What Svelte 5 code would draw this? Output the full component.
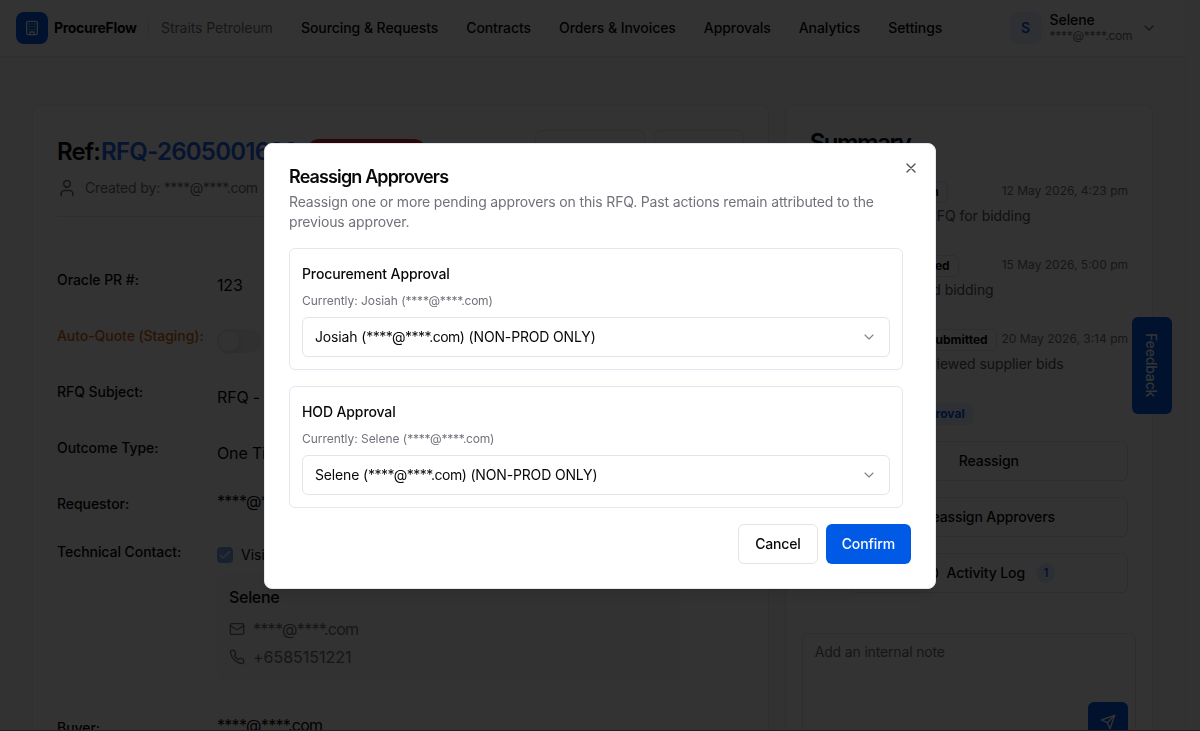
<script>
  const navItems = ['Sourcing & Requests', 'Contracts', 'Orders & Invoices', 'Approvals', 'Analytics', 'Settings'];

  const timeline = [
    { status: 'Submission', width: 98, date: '12 May 2026, 4:23 pm', text: 'Opened RFQ for bidding', textWidth: 181 },
    { status: 'Bid Closed', width: 109, date: '15 May 2026, 5:00 pm', text: 'System closed bidding', textWidth: 144 },
    { status: 'Review Submitted', width: 147, date: '20 May 2026, 3:14 pm', text: 'Selene reviewed supplier bids', textWidth: 214 }
  ];

  const approvers = [
    { title: 'Procurement Approval', name: 'Josiah' },
    { title: 'HOD Approval', name: 'Selene' }
  ];

  const email = '****@****.com';

  let open = $state(true);
  let note = $state('');
</script>

{#snippet chevron()}
  <svg class="chevron" viewBox="0 0 24 24"><path d="m6 9 6 6 6-6" /></svg>
{/snippet}

{#snippet mail()}<span class="email">{email}</span>{/snippet}

<div class="page">
  <div class="view">
    <header>
      <div class="logo">
        <svg viewBox="0 0 24 24">
          <rect x="4" y="2" width="16" height="20" rx="2" />
          <path d="M9 22v-4h6v4M8 6h.01M16 6h.01M12 6h.01M12 10h.01M12 14h.01M16 10h.01M16 14h.01M8 10h.01M8 14h.01" />
        </svg>
      </div>
      <span class="brand">ProcureFlow</span>
      <span class="sep"></span>
      <span class="company">Straits Petroleum</span>
      <nav>
        {#each navItems as item}
          <span>{item}</span>
        {/each}
      </nav>
      <div class="user">
        <div class="avatar">S</div>
        <div class="who">
          <div class="name">Selene</div>
          <div class="mail">{@render mail()}</div>
        </div>
        {@render chevron()}
      </div>
    </header>

    <main>
      <section class="card details">
        <div class="ref-row">
          <h1>Ref: <span>RFQ-2605001622</span></h1>
          <div class="expired"></div>
          <div class="ghost wide"></div>
          <div class="ghost"></div>
        </div>
        <div class="created">
          <svg viewBox="0 0 24 24"><path d="M19 21v-2a4 4 0 0 0-4-4H9a4 4 0 0 0-4 4v2" /><circle cx="12" cy="7" r="4" /></svg>
          <div>Created by: {@render mail()}</div>
        </div>

        <div class="fields">
          <div class="field"><label for="pr">Oracle PR #:</label><div id="pr" class="value">123</div></div>
          <div class="field">
            <label class="orange" for="auto">Auto-Quote (Staging):</label>
            <div id="auto" class="value"><span class="toggle"><i></i></span></div>
          </div>
          <div class="field"><label for="subject">RFQ Subject:</label><div id="subject" class="value">RFQ - 123</div></div>
          <div class="field"><label for="outcome">Outcome Type:</label><div id="outcome" class="value">One Time</div></div>
          <div class="field short"><label for="req">Requestor:</label><div id="req" class="value">{@render mail()}</div></div>
          <div class="field contact">
            <label for="tech">Technical Contact:</label>
            <div id="tech">
              <div class="visible">
                <span class="check"><svg viewBox="0 0 24 24"><path d="M20 6 9 17l-5-5" /></svg></span>
                Visible
              </div>
              <div class="contact-box">
                <div class="contact-name">Selene</div>
                <div class="line">
                  <svg viewBox="0 0 24 24"><rect x="2" y="4" width="20" height="16" rx="2" /><path d="m22 7-8.97 5.7a1.94 1.94 0 0 1-2.06 0L2 7" /></svg>
                  {@render mail()}
                </div>
                <div class="line phone">
                  <svg viewBox="0 0 24 24"><path d="M22 16.92v3a2 2 0 0 1-2.18 2 19.79 19.79 0 0 1-8.63-3.07 19.5 19.5 0 0 1-6-6 19.79 19.79 0 0 1-3.07-8.67A2 2 0 0 1 4.11 2h3a2 2 0 0 1 2 1.72 12.84 12.84 0 0 0 .7 2.81 2 2 0 0 1-.45 2.11L8.09 9.91a16 16 0 0 0 6 6l1.27-1.27a2 2 0 0 1 2.11-.45 12.84 12.84 0 0 0 2.81.7A2 2 0 0 1 22 16.92z" /></svg>
                  +6585151221
                </div>
              </div>
            </div>
          </div>
          <div class="field short"><label for="buyer">Buyer:</label><div id="buyer" class="value">{@render mail()}</div></div>
        </div>
      </section>

      <section class="card summary">
        <h2>Summary</h2>
        <div class="timeline">
          {#each timeline as t}
            <div class="event">
              <div class="event-head">
                <span class="badge" style="width: {t.width}px">{t.status}</span>
                <time>{t.date}</time>
              </div>
              <div class="event-text" style="width: {t.textWidth}px">{t.text}</div>
            </div>
          {/each}
          <div class="pending"><span class="badge blue">Pending Approval</span></div>
          <div class="actions">
            <button>Reassign</button>
            <button>Reassign Approvers</button>
            <button>
              <svg viewBox="0 0 24 24"><circle cx="12" cy="12" r="10" /><path d="M12 6v6l4 2" /></svg>
              Activity Log
              <span class="count">1</span>
            </button>
          </div>
        </div>
        <div class="note">
          <textarea placeholder="Add an internal note" bind:value={note}></textarea>
          <button class="send" aria-label="Send">
            <svg viewBox="0 0 24 24"><path d="m22 2-7 20-4-9-9-4Z" /><path d="M22 2 11 13" /></svg>
          </button>
        </div>
      </section>
    </main>
  </div>
  <div class="scroll"></div>
  <div class="feedback">Feedback</div>
  <div class="strip"></div>
</div>

{#if open}
  <div class="overlay"></div>
  <div class="modal" role="dialog">
    <div class="modal-head">
      <h3>Reassign Approvers</h3>
      <p>Reassign one or more pending approvers on this RFQ. Past actions remain attributed to the previous approver.</p>
    </div>
    <div class="list">
      {#each approvers as a}
        <div class="approver">
          <div class="approver-title">{a.title}</div>
          <div class="current">Currently: {a.name} ({@render mail()})</div>
          <div class="select">
            <span>{a.name} ({@render mail()}) (NON-PROD ONLY)</span>
            {@render chevron()}
          </div>
        </div>
      {/each}
    </div>
    <div class="modal-foot">
      <button class="cancel" onclick={() => (open = false)}>Cancel</button>
      <button class="confirm" onclick={() => (open = false)}>Confirm</button>
    </div>
    <button class="close" aria-label="Close" onclick={() => (open = false)}>
      <svg viewBox="0 0 24 24"><path d="M18 6 6 18M6 6l12 12" /></svg>
    </button>
  </div>
{/if}

<style>
  :global(body) {
    font-family: Inter, "Liberation Sans", sans-serif;
    font-size: 14px;
    line-height: 20px;
    letter-spacing: -0.155px;
    color: #09090b;
    overflow: hidden;
  }
  .page, .page *, .modal, .modal * { box-sizing: border-box; }
  svg { fill: none; stroke: currentColor; stroke-width: 2; stroke-linecap: round; stroke-linejoin: round; flex: none; display: block; }
  button { font: inherit; font-weight: 500; letter-spacing: -0.1px; color: inherit; background: #fff; }
  h1, h2, h3, p { margin: 0; }
  .email { letter-spacing: -0.036em; }

  .page { display: flex; height: 731px; overflow: hidden; background: #fafafa; position: relative; }
  .view { flex: 1; min-width: 0; }
  .scroll { width: 15px; background: #f7f7f7; border-left: 1px solid #ededed; }

  header { height: 57px; padding: 0 28px 0 16px; display: flex; align-items: center; background: #fff; border-bottom: 1px solid #e8e8e8; font-weight: 500; letter-spacing: -0.07px; }
  .logo { width: 32px; height: 32px; border-radius: 8px; background: #005ae6; color: #fff; display: grid; place-items: center; }
  .logo svg { width: 16px; height: 16px; }
  .brand { margin-left: 6px; font-weight: 700; letter-spacing: -0.3px; width: 83px; white-space: nowrap; }
  .sep { width: 1px; height: 18px; margin: 0 12px 0 11px; background: #e4e4e7; }
  .company { width: 112px; white-space: nowrap; font-weight: 400; color: #71717a; }
  nav { display: flex; gap: 28px; margin-left: 28px; white-space: nowrap; }
  .user { margin-left: auto; display: flex; align-items: center; gap: 8px; }
  .avatar { width: 32px; height: 32px; border-radius: 8px; background: #e9f1fd; color: #005ae6; font-weight: 600; display: grid; place-items: center; }
  .who { padding-bottom: 2px; width: 83.5px; }
  .name { line-height: 16px; }
  .mail { font-size: 12px; line-height: 15px; font-weight: 400; color: #71717a; }
  .mail .email, .mail :global(.email), .current :global(.email) { letter-spacing: -0.02em; }
  .user .chevron, .user :global(.chevron) { width: 16px; height: 16px; color: #71717a; }

  main { display: grid; grid-template-columns: 2fr 1fr; gap: 16px; padding: 48px 32px 0; }
  .card { background: #fff; border: 1px solid #e8e8e8; border-radius: 8px; height: 700px; min-width: 0; }
  .details { padding: 24px; }
  .ref-row { display: flex; height: 42px; align-items: center; white-space: nowrap; }
  h1 { font-size: 24px; line-height: 32px; font-weight: 600; letter-spacing: -0.9px; width: 250px; padding-top: 1px; }
  h1 span { color: #2563eb; margin-left: -4px; letter-spacing: -0.75px; }
  .expired { width: 119px; height: 24px; border-radius: 12px; background: #dc2626; }
  .ghost { width: 90px; height: 42px; border: 1px solid #e4e4e7; border-radius: 6px; margin-left: 9px; }
  .ghost.wide { width: 110px; margin-left: auto; }
  .created { display: flex; align-items: center; gap: 8px; height: 45px; padding-bottom: 12px; color: #71717a; border-bottom: 1px solid #e4e4e7; }
  .created svg { width: 20px; height: 20px; }

  .fields { display: flex; flex-direction: column; gap: 16px; padding-top: 48px; }
  .field { display: grid; grid-template-columns: 160px 1fr; height: 40px; }
  .field.short { height: 32px; }
  .field.contact { height: 160px; }
  label { padding-top: 5px; font-weight: 500; letter-spacing: -0.06px; white-space: nowrap; }
  .orange { color: #ca6510; }
  .value { font-size: 16px; line-height: 24px; display: flex; align-items: center; }
  .value .email, .value :global(.email), .line :global(.email) { letter-spacing: -0.044em; }
  .short .value { height: 24px; }
  .toggle { width: 44px; height: 24px; border-radius: 12px; background: #ededed; padding: 2px; }
  .toggle i { display: block; width: 20px; height: 20px; border-radius: 50%; background: #fafafa; box-shadow: 0 2px 6px rgba(0, 0, 0, .08); }
  .visible { display: flex; align-items: center; gap: 8px; height: 36px; letter-spacing: 0; }
  .check { width: 16px; height: 16px; border-radius: 4px; background: #7aa5f0; color: #fff; display: grid; place-items: center; }
  .check svg { width: 14px; height: 14px; }
  .contact-box { width: 464px; height: 108px; padding: 12px; border-radius: 6px; background: #f7f7f7; font-size: 16px; line-height: 24px; letter-spacing: -0.02px; }
  .contact-name { font-weight: 500; margin-bottom: 8px; letter-spacing: -0.3px; }
  .line { display: flex; align-items: center; gap: 8px; color: #71717a; }
  .line svg { width: 16px; height: 16px; }
  .phone { margin-top: 4px; }

  .summary { padding: 21px 24px; }
  h2 { font-size: 24px; line-height: 32px; font-weight: 600; letter-spacing: -1.5px; }
  .timeline { margin: 20px 0 0 11px; padding-left: 28px; border-left: 1px solid #e4e4e7; height: 413px; }
  .event { height: 74px; }
  .event-head { display: flex; align-items: center; justify-content: space-between; height: 24px; white-space: nowrap; letter-spacing: 0; }
  .badge { display: inline-block; border: 1px solid #e4e4e7; border-radius: 6px; height: 22px; padding: 0 8px; font-size: 12px; line-height: 20px; font-weight: 700; letter-spacing: 0; text-align: right; white-space: nowrap; position: relative; top: 1px; }
  .badge.blue { width: 124px; background: #e9f1fd; border-color: #e9f1fd; color: #005ae6; }
  time { font-size: 12px; color: #71717a; }
  .event-text { display: flex; justify-content: flex-end; margin-top: 3px; height: 20px; color: #52525b; white-space: nowrap; letter-spacing: -0.05px; }
  .pending { height: 40px; }
  .pending .badge { top: 2px; }
  .actions { display: flex; flex-direction: column; gap: 16px; }
  .actions button { height: 40px; border: 1px solid #e4e4e7; border-radius: 6px; display: flex; align-items: center; justify-content: center; gap: 8px; padding: 0; }
  .actions svg { width: 16px; height: 16px; }
  .count { margin-left: 4px; min-width: 18px; height: 20px; border-radius: 9px; background: #dbeafe; color: #1d4ed8; font-size: 12px; display: grid; place-items: center; }
  .note { margin: 41px -8px 0; position: relative; }
  textarea { display: block; width: 100%; height: 120px; resize: none; border: 1px solid #e4e4e7; border-radius: 6px; background: #fff; padding: 8px 12px; font: inherit; letter-spacing: inherit; outline: 0; }
  textarea::placeholder { color: #71717a; }
  .send { position: absolute; right: 8px; top: 69px; width: 40px; height: 40px; padding: 0; border: 0; border-radius: 6px; background: #005ae6; color: #fff; display: grid; place-items: center; }
  .send svg { width: 16px; height: 16px; }

  .feedback { position: absolute; left: 1132px; top: 317px; width: 40px; height: 97px; padding-right: 2px; border-radius: 6px; background: #005ae6; color: #fff; font-weight: 500; writing-mode: vertical-rl; display: grid; place-items: center; }
  .strip { position: absolute; left: 0; right: 0; bottom: 0; height: 1px; background: #c08a98; }

  .overlay { position: fixed; inset: 0; background: rgba(0, 0, 0, .8); }
  .modal {
    position: fixed; left: 50%; top: 50%; transform: translate(-50%, -50%);
    width: 672px; height: 446px; padding: 24px;
    display: flex; flex-direction: column; gap: 16px;
    background: #fff; border: 1px solid #e2e8f0; border-radius: 8px;
    box-shadow: 0 10px 15px -3px rgba(0, 0, 0, .1), 0 4px 6px -4px rgba(0, 0, 0, .1);
  }
  .modal-head { display: flex; flex-direction: column; gap: 6px; }
  h3 { font-size: 18px; line-height: 18px; font-weight: 600; letter-spacing: -0.87px; }
  .modal-head p { color: #71717a; }
  .list { display: flex; flex-direction: column; gap: 16px; padding-right: 8px; }
  .approver { height: 122px; padding: 12px; border: 1px solid #e2e8f0; border-radius: 6px; }
  .approver-title { font-weight: 500; letter-spacing: -0.12px; line-height: 26px; margin-bottom: 6px; }
  .current { font-size: 12px; line-height: 16px; color: #71717a; margin-bottom: 8px; letter-spacing: -0.04px; }
  .select { height: 40px; padding: 0 12px; display: flex; align-items: center; justify-content: space-between; border: 1px solid #e4e4e7; border-radius: 6px; }
  .select .chevron, .select :global(.chevron) { width: 16px; height: 16px; opacity: .5; stroke-width: 1.7; }
  .modal-foot { display: flex; justify-content: flex-end; gap: 8px; }
  .modal-foot button { height: 40px; padding: 0 16px; border: 1px solid #e4e4e7; border-radius: 6px; letter-spacing: -0.18px; }
  .modal-foot .confirm { border: 0; background: #005ae6; color: #fafafa; letter-spacing: -0.1px; }
  .close { position: absolute; right: 16px; top: 16px; width: 16px; height: 16px; padding: 0; border: 0; opacity: .7; }
  .close svg { width: 16px; height: 16px; }
</style>
